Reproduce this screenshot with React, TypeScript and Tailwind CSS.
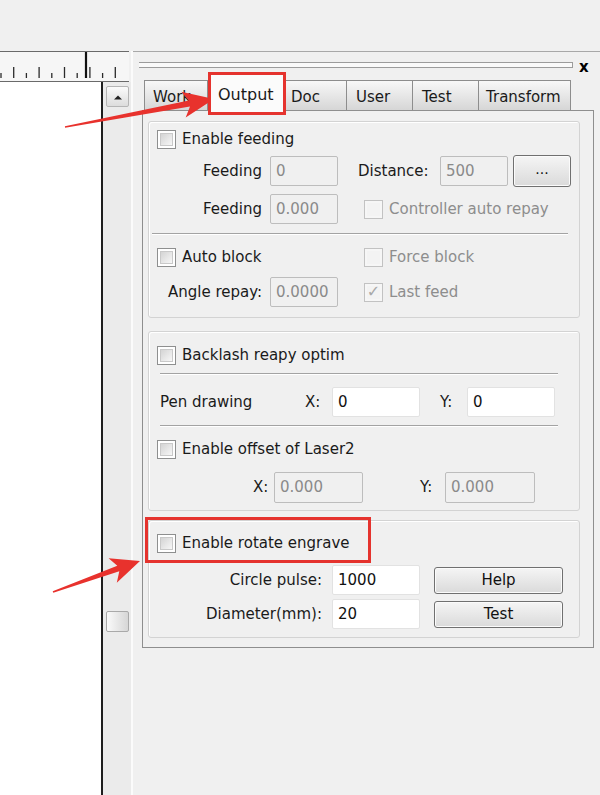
import React from "react";

const tabs = [
  { label: "Work", w: "w-[64px]", pl: "pl-[8px]" },
  { label: "Output", w: "w-[78px]", pl: "pl-[7px]", active: true },
  { label: "Doc", w: "w-[62px]", pl: "pl-[5px]" },
  { label: "User", w: "w-[67px]", pl: "pl-[9px]" },
  { label: "Test", w: "w-[67px]", pl: "pl-[9px]" },
  { label: "Transform", w: "w-[93px]", pl: "pl-[7px]" },
];

const ticks = Array.from({ length: 10 }, (_, i) => i);

function Check({ checked = false, disabled = false }: { checked?: boolean; disabled?: boolean }) {
  return (
    <span
      className={`flex h-[19px] w-[19px] shrink-0 items-center justify-center border ${
        disabled ? "border-[#c2c2c2] bg-[#f6f6f6]" : "border-[#8e8f8f] bg-white"
      }`}
    >
      <span
        className={`flex h-[13px] w-[13px] items-center justify-center text-[16px] leading-none ${
          disabled
            ? "bg-[#f3f3f3] text-[#a8a8a8]"
            : "border border-[#c9c9c9] bg-linear-to-br from-[#d4d4d4] to-[#f7f7f7]"
        }`}
      >
        {checked ? "✓" : ""}
      </span>
    </span>
  );
}

function CheckRow({ label, checked, disabled }: { label: string; checked?: boolean; disabled?: boolean }) {
  return (
    <div className="flex items-center">
      <Check checked={checked} disabled={disabled} />
      <span className={`ml-[6px] leading-none ${disabled ? "text-[#8d8d8d]" : ""}`}>{label}</span>
    </div>
  );
}

function Field({ value, className, disabled }: { value: string; className: string; disabled?: boolean }) {
  return (
    <div
      className={`flex h-[30px] items-center rounded-[2px] border pl-[5px] leading-none ${className} ${
        disabled ? "border-[#bdbdbd] bg-[#f0f0f0] text-[#8a8a8a]" : "border-[#e2e2e2] bg-white text-[#111]"
      }`}
    >
      {value}
    </div>
  );
}

function Btn({ label, className }: { label: string; className: string }) {
  return (
    <button
      className={`flex items-center justify-center rounded-[3px] border border-[#707070] bg-linear-to-b from-[#f5f5f5] to-[#dadada] leading-none text-[#111] shadow-[inset_0_0_0_1px_#fbfbfb] ${className}`}
    >
      {label}
    </button>
  );
}

function Sep({ className }: { className: string }) {
  return <div className={`h-[2px] border-t border-[#a3a3a3] border-b border-b-white ${className}`} />;
}

export default function App() {
  return (
    <div className="relative h-[795px] w-[600px] overflow-hidden bg-[#f0f0f0] font-['DejaVu_Sans',sans-serif] text-[15px] text-[#1a1a1a]">
      <div className="h-[51px]" />

      <div className="flex h-[744px]">
        {/* left: ruler, canvas, scrollbar */}
        <div className="flex w-[131px] flex-col">
          <div className="h-[31px] w-[129px] border-t border-b border-[#6a6a6a] bg-[#f6f6f6]">
            <svg width="129" height="29">
              {ticks.map((i) => {
                const x = 1 + i * 12.7;
                return (
                  <line
                    key={i}
                    x1={x}
                    x2={x}
                    y1={i % 2 === 1 ? 15 : 21}
                    y2={26}
                    stroke="#2a2a2a"
                    strokeWidth="1.3"
                  />
                );
              })}
              <line x1="86" x2="86" y1="0" y2="26" stroke="#111" strokeWidth="2.2" />
            </svg>
          </div>
          <div className="flex flex-1">
            <div className="w-[103px] border-r-2 border-[#1e1e1e] bg-white" />
            <div className="flex flex-1 flex-col bg-[#ebebeb] pl-[3px] pt-[4px]">
              <div className="flex h-[21px] w-[23px] items-center justify-center rounded-[2px] border border-[#b5b5b5] bg-linear-to-b from-[#fbfbfb] to-[#dcdcdc]">
                <svg width="10" height="6" viewBox="0 0 10 6">
                  <path d="M1 5.5 L5 1.5 L9 5.5 Z" fill="#222" />
                </svg>
              </div>
              <div className="mt-[504px] h-[21px] w-[23px] rounded-[2px] border border-[#a9a9a9] bg-linear-to-r from-[#fafafa] to-[#d6d6d6]" />
            </div>
          </div>
        </div>

        <div className="w-[2px] bg-[#fbfbfb]" />

        {/* right: property panel */}
        <div className="flex flex-1 flex-col border-t border-[#a8a8a8]">
          <div className="flex h-[28px] items-start">
            <div className="ml-[6px] mt-[10px] h-[6px] w-[434px] border-y border-r border-[#9c9c9c] bg-[#fafafa]" />
            <span className="ml-[6px] mt-[8px] text-[15px] font-bold leading-none text-black">x</span>
          </div>

          <div className="ml-[12px] flex h-[30px] items-start">
            {tabs.map((t) =>
              t.active ? (
                <div
                  key={t.label}
                  className={`relative z-10 -mt-[8px] flex h-[43px] items-center border-[3px] border-[#e5332e] bg-[#fbfbfb] pt-[2px] ${t.w} ${t.pl} text-[16px] leading-none`}
                >
                  {t.label}
                </div>
              ) : (
                <div
                  key={t.label}
                  className={`-ml-px flex h-[30px] items-center border border-b-0 border-[#8d8d8d] bg-linear-to-b from-[#f8f8f8] to-[#d6d6d6] pt-[4px] ${t.w} ${t.pl} leading-none`}
                >
                  {t.label}
                </div>
              )
            )}
          </div>

          <div className="ml-[9px] flex h-[538px] w-[452px] flex-col border border-[#8e8e8e] bg-[#f0f0f0] pl-[5px] pt-[10px]">
            {/* group 1 */}
            <div className="flex h-[197px] w-[432px] flex-col rounded-[3px] border border-[#d3d3d3] pl-[8px] shadow-[inset_1px_1px_0_#ffffff]">
              <div className="mt-[7px] flex h-[20px] items-center">
                <CheckRow label="Enable feeding" />
              </div>
              <div className="mt-[5px] flex h-[32px] items-center pt-[2px]">
                <span className="w-[105px] text-right leading-none">Feeding</span>
                <Field value="0" className="ml-[8px] w-[68px]" disabled />
                <span className="ml-[20px] w-[82px] leading-none">Distance:</span>
                <Field value="500" className="w-[68px]" disabled />
                <Btn label="..." className="ml-[5px] h-[32px] w-[58px] pb-[4px] text-[14px]" />
              </div>
              <div className="mt-[8px] flex h-[30px] items-center">
                <span className="w-[105px] text-right leading-none">Feeding</span>
                <Field value="0.000" className="ml-[8px] w-[68px]" disabled />
                <div className="ml-[26px]">
                  <CheckRow label="Controller auto repay" disabled />
                </div>
              </div>
              <Sep className="ml-[-5px] mt-[9px] w-[416px]" />
              <div className="mt-[12px] flex h-[20px] items-center">
                <div className="w-[207px]">
                  <CheckRow label="Auto block" />
                </div>
                <CheckRow label="Force block" disabled />
              </div>
              <div className="mt-[10px] flex h-[30px] items-center">
                <span className="w-[105px] text-right leading-none">Angle repay:</span>
                <Field value="0.0000" className="ml-[8px] w-[68px]" disabled />
                <div className="ml-[26px]">
                  <CheckRow label="Last feed" checked disabled />
                </div>
              </div>
            </div>

            {/* group 2 */}
            <div className="mt-[13px] flex h-[180px] w-[432px] flex-col rounded-[3px] border border-[#d3d3d3] pl-[8px] shadow-[inset_1px_1px_0_#ffffff]">
              <div className="mt-[13px] flex h-[20px] items-center">
                <CheckRow label="Backlash reapy optim" />
              </div>
              <Sep className="ml-[3px] mt-[8px] w-[398px]" />
              <div className="mt-[12px] flex h-[30px] items-center">
                <span className="w-[148px] pl-[3px] leading-none">Pen drawing</span>
                <span className="w-[27px] leading-none">X:</span>
                <Field value="0" className="w-[88px]" />
                <span className="ml-[20px] w-[27px] leading-none">Y:</span>
                <Field value="0" className="w-[88px]" />
              </div>
              <Sep className="ml-[3px] mt-[8px] w-[398px]" />
              <div className="mt-[12px] flex h-[20px] items-center">
                <CheckRow label="Enable offset of Laser2" />
              </div>
              <div className="mt-[13px] flex h-[31px] items-center">
                <span className="ml-[96px] w-[21px] leading-none">X:</span>
                <Field value="0.000" className="h-[31px] w-[89px]" disabled />
                <span className="ml-[57px] w-[25px] leading-none">Y:</span>
                <Field value="0.000" className="h-[31px] w-[90px]" disabled />
              </div>
            </div>

            {/* group 3 */}
            <div className="relative mt-[9px] flex h-[118px] w-[432px] flex-col rounded-[3px] border border-[#d3d3d3] pl-[8px] shadow-[inset_1px_1px_0_#ffffff]">
              <div className="mt-[12px] flex h-[20px] items-center">
                <CheckRow label="Enable rotate engrave" />
              </div>
              <div className="mt-[12px] flex h-[30px] items-center">
                <span className="w-[165px] text-right leading-none">Circle pulse:</span>
                <Field value="1000" className="ml-[10px] w-[88px]" />
                <Btn label="Help" className="ml-[14px] h-[27px] w-[129px]" />
              </div>
              <div className="mt-[4px] flex h-[30px] items-center">
                <span className="w-[165px] text-right leading-none">Diameter(mm):</span>
                <Field value="20" className="ml-[10px] w-[88px]" />
                <Btn label="Test" className="ml-[14px] h-[27px] w-[129px]" />
              </div>
              <div className="absolute left-[-4px] top-[-4px] h-[46px] w-[226px] border-[3px] border-[#e5332e]" />
            </div>
          </div>
        </div>
      </div>

      {/* annotation arrows */}
      <svg className="pointer-events-none absolute left-0 top-0" width="600" height="795">
        <path
          d="M64.9 126.2 L188.8 100.6 L181.3 91.8 L214 99 L185.7 117.4 L190 106.4 L65.1 127.8 Z"
          fill="#e8322d"
        />
        <path
          d="M52.7 591.2 L117.3 565.7 L108.6 558.2 L140 561 L116.8 582.8 L119.3 571.3 L53.3 592.8 Z"
          fill="#e8322d"
        />
      </svg>
    </div>
  );
}
